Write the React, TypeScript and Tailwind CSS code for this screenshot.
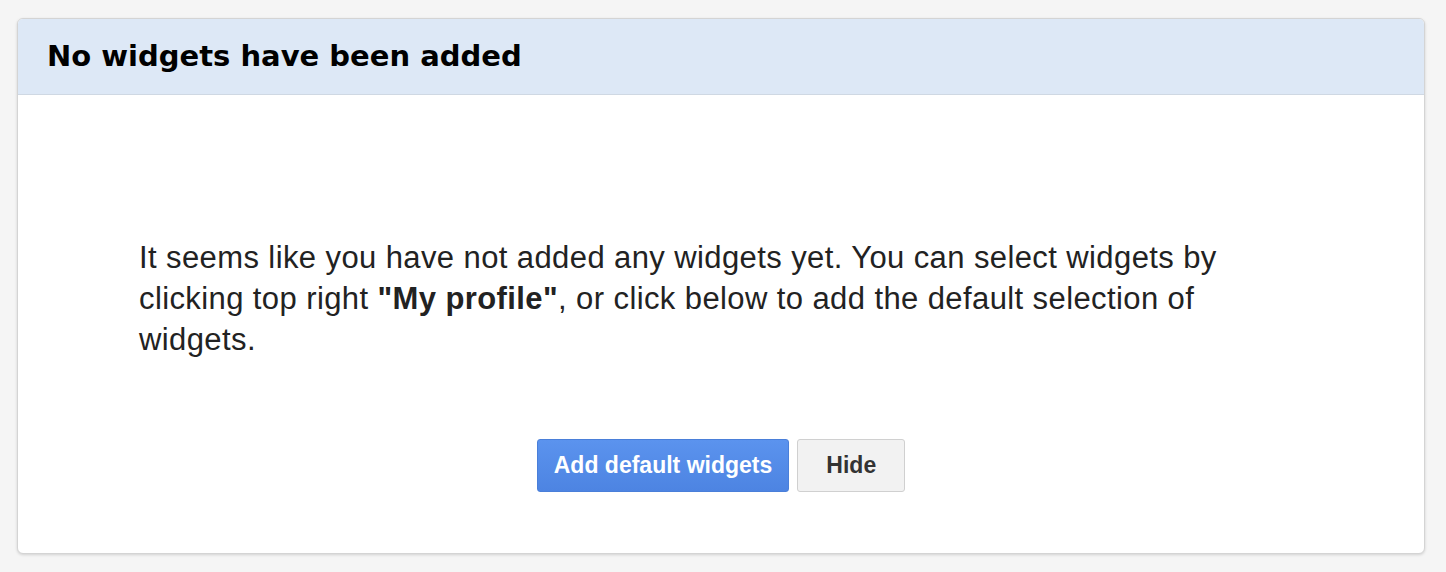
export default function App() {
  return (
    <div className="min-h-screen bg-[#f5f5f5] pt-[18px] px-[17px]">
      <div className="w-[1408px] rounded-[6px] border border-[#d4d4d4] bg-white shadow-[0_1px_3px_rgba(0,0,0,0.15)] overflow-hidden">
        {/* Header */}
        <div className="h-[76px] bg-[#dde8f6] border-b border-[#cfd8e3] flex items-center px-[29px]">
          <h1 className="font-['DejaVu_Sans',sans-serif] font-bold text-[29px] text-black">
            No widgets have been added
          </h1>
        </div>

        {/* Body */}
        <div className="pt-[142px] pb-[61px] px-[121px] font-['Liberation_Sans',Arial,sans-serif]">
          <p className="text-[31px] leading-[41px] tracking-[0.4px] text-[#222]">
            It seems like you have not added any widgets yet. You can select widgets by clicking top right{" "}
            <b>"My profile"</b>, or click below to add the default selection of widgets.
          </p>
          <div className="mt-[79px] flex justify-center gap-[8px]">
            <button className="h-[53px] px-[16px] rounded-[3px] border border-[#4a7fd9] bg-gradient-to-b from-[#5b93ee] to-[#4d84e2] text-white font-bold text-[23px]">
              Add default widgets
            </button>
            <button className="h-[53px] w-[108px] rounded-[3px] border border-[#d0d0d0] bg-[#f2f2f2] text-[#333] font-bold text-[23px]">
              Hide
            </button>
          </div>
        </div>
      </div>
    </div>
  );
}
